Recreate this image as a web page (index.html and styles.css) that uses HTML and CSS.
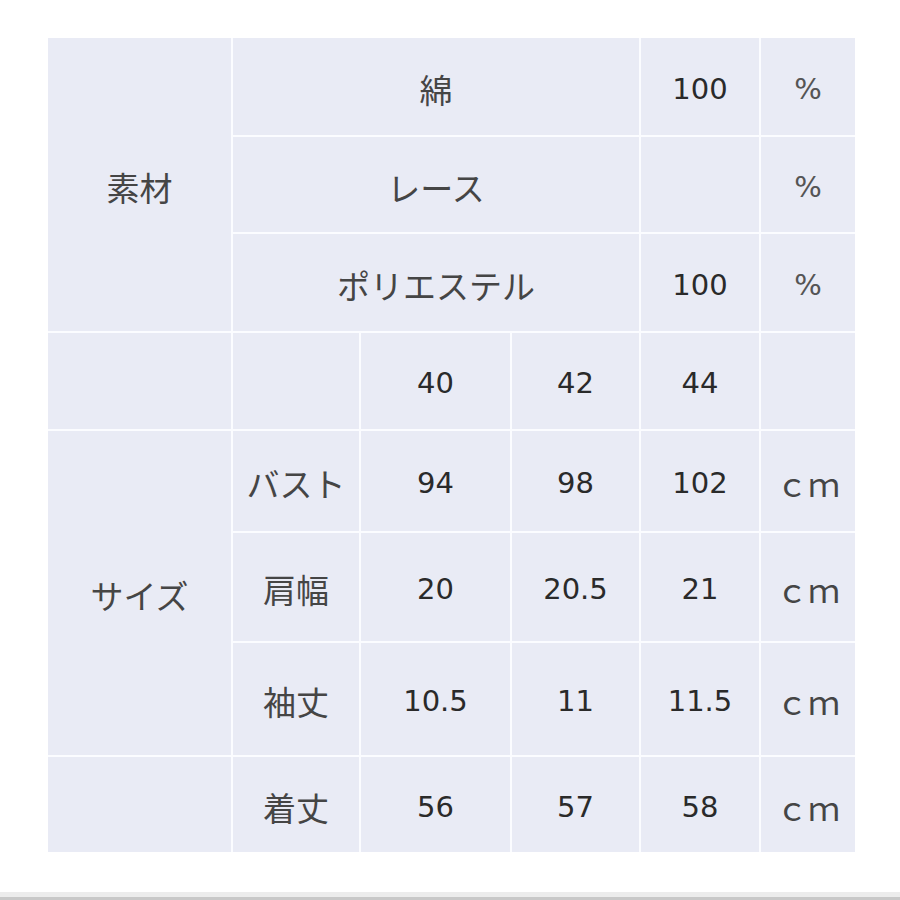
FILE: index.html
```html
<!DOCTYPE html>
<html lang="ja">
<head>
<meta charset="utf-8">
<title>素材・サイズ</title>
<link rel="stylesheet" href="styles.css">
</head>
<body>
<div class="page">
  <div class="spec">
    <div class="cell jp rows3">素材</div>
    <div class="cell jp cols3">綿</div>
    <div class="cell num">100</div>
    <div class="cell unit">%</div>

    <div class="cell jp cols3">レース</div>
    <div class="cell"></div>
    <div class="cell unit">%</div>

    <div class="cell jp cols3">ポリエステル</div>
    <div class="cell num">100</div>
    <div class="cell unit">%</div>

    <div class="cell"></div>
    <div class="cell"></div>
    <div class="cell num">40</div>
    <div class="cell num">42</div>
    <div class="cell num">44</div>
    <div class="cell"></div>

    <div class="cell jp rows3">サイズ</div>
    <div class="cell jp">バスト</div>
    <div class="cell num">94</div>
    <div class="cell num">98</div>
    <div class="cell num">102</div>
    <div class="cell jp cm">ｃｍ</div>

    <div class="cell jp">肩幅</div>
    <div class="cell num">20</div>
    <div class="cell num">20.5</div>
    <div class="cell num">21</div>
    <div class="cell jp cm">ｃｍ</div>

    <div class="cell jp">袖丈</div>
    <div class="cell num">10.5</div>
    <div class="cell num">11</div>
    <div class="cell num">11.5</div>
    <div class="cell jp cm">ｃｍ</div>

    <div class="cell"></div>
    <div class="cell jp">着丈</div>
    <div class="cell num">56</div>
    <div class="cell num">57</div>
    <div class="cell num">58</div>
    <div class="cell jp cm">ｃｍ</div>
  </div>
  <div class="bottom-bar"></div>
</div>
</body>
</html>
```

FILE: styles.css
```css
html, body {
  margin: 0;
  padding: 0;
  background: #ffffff;
}

.page {
  width: 900px;
  height: 900px;
  display: flex;
  flex-direction: column;
  overflow: hidden;
}

.spec {
  margin: 38px 0 0 48px;
  display: grid;
  grid-template-columns: 183px 126px 149px 127px 118px 94px;
  grid-template-rows: 97px 95px 97px 96px 100px 108px 112px 95px;
  gap: 2px;
  background: #fbfcff;
  width: 807px;
}

.cell {
  background: #e9ebf5;
  display: flex;
  align-items: center;
  justify-content: center;
  padding-top: 4px;
  box-sizing: border-box;
  font-family: "DejaVu Sans", "Noto Sans CJK JP", sans-serif;
  color: #2b2b2b;
}

.rows3 {
  grid-row: span 3;
}

.cols3 {
  grid-column: span 3;
}

.jp {
  font-family: "Noto Sans CJK JP", sans-serif;
  font-size: 33px;
  font-weight: 400;
  color: #454545;
}

.num {
  font-size: 29px;
  color: #2a2a2a;
}

.unit {
  font-size: 29px;
  color: #555555;
}

.cm {
  font-size: 32px;
}

.bottom-bar {
  margin-top: 40px;
  height: 5px;
  background: #ececec;
  border-bottom: 3px solid #c8c8c8;
}
```
